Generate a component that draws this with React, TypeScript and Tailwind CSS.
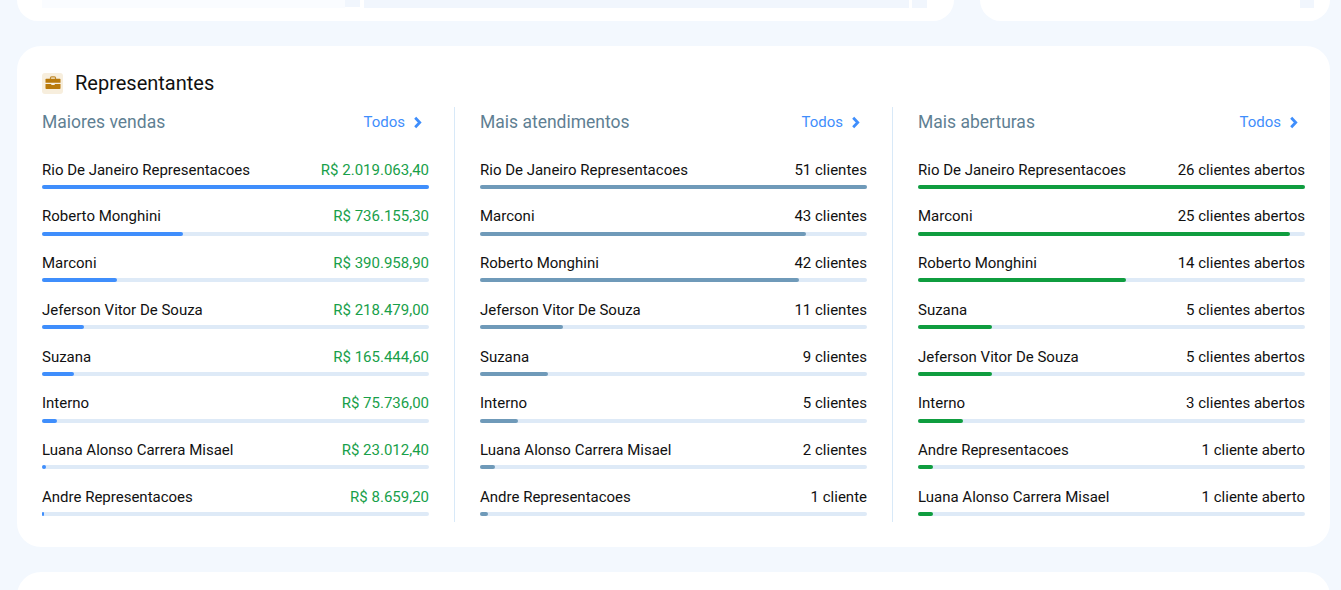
interface Row {
  name: string
  label: string
  value: number
}

const vendas: Row[] = [
  { name: 'Rio De Janeiro Representacoes', label: 'R$ 2.019.063,40', value: 2019063.4 },
  { name: 'Roberto Monghini', label: 'R$ 736.155,30', value: 736155.3 },
  { name: 'Marconi', label: 'R$ 390.958,90', value: 390958.9 },
  { name: 'Jeferson Vitor De Souza', label: 'R$ 218.479,00', value: 218479 },
  { name: 'Suzana', label: 'R$ 165.444,60', value: 165444.6 },
  { name: 'Interno', label: 'R$ 75.736,00', value: 75736 },
  { name: 'Luana Alonso Carrera Misael', label: 'R$ 23.012,40', value: 23012.4 },
  { name: 'Andre Representacoes', label: 'R$ 8.659,20', value: 8659.2 },
]

const atendimentos: Row[] = [
  { name: 'Rio De Janeiro Representacoes', label: '51 clientes', value: 51 },
  { name: 'Marconi', label: '43 clientes', value: 43 },
  { name: 'Roberto Monghini', label: '42 clientes', value: 42 },
  { name: 'Jeferson Vitor De Souza', label: '11 clientes', value: 11 },
  { name: 'Suzana', label: '9 clientes', value: 9 },
  { name: 'Interno', label: '5 clientes', value: 5 },
  { name: 'Luana Alonso Carrera Misael', label: '2 clientes', value: 2 },
  { name: 'Andre Representacoes', label: '1 cliente', value: 1 },
]

const aberturas: Row[] = [
  { name: 'Rio De Janeiro Representacoes', label: '26 clientes abertos', value: 26 },
  { name: 'Marconi', label: '25 clientes abertos', value: 25 },
  { name: 'Roberto Monghini', label: '14 clientes abertos', value: 14 },
  { name: 'Suzana', label: '5 clientes abertos', value: 5 },
  { name: 'Jeferson Vitor De Souza', label: '5 clientes abertos', value: 5 },
  { name: 'Interno', label: '3 clientes abertos', value: 3 },
  { name: 'Andre Representacoes', label: '1 cliente aberto', value: 1 },
  { name: 'Luana Alonso Carrera Misael', label: '1 cliente aberto', value: 1 },
]

function BriefcaseIcon() {
  return (
    <div className="flex size-[21px] items-center justify-center rounded-[3px] bg-[#f7eedd]">
      <svg width="16" height="14" viewBox="0 0 16 14">
        <path d="M5.5 3V1.8C5.5 1.2 6 .8 6.5 .8h3c.5 0 1 .4 1 1V3" fill="none" stroke="#c08a2e" strokeWidth="1.2" />
        <path d="M1.2 2.7h13.6c.5 0 .7.3.7.7v3.400H.5V3.400c0-.4.2-.7.7-.7z" fill="#b97a0c" />
        <path d="M.5 7.900h5.800v1.200h3.400V7.900h5.800v4.400c0 .5-.3.8-.8.8H1.300c-.5 0-.8-.3-.8-.8z" fill="#b97a0c" />
      </svg>
    </div>
  )
}

function TodosChevron() {
  return (
    <svg width="9" height="13" viewBox="0 0 9 13">
      <path d="M2.200 1.800 6.700 6.500 2.200 11.200" fill="none" stroke="currentColor" strokeWidth="2.800" />
    </svg>
  )
}

function RankColumn({
  title,
  rows,
  labelClass,
  barClass,
  divider,
}: {
  title: string
  rows: Row[]
  labelClass: string
  barClass: string
  divider?: boolean
}) {
  const max = rows[0].value

  return (
    <div className={divider ? 'border-l border-[#d8e9f8] pl-[25px]' : ''}>
      <div className="w-[387px]">
        <div className="flex h-[29px] items-center justify-between">
          <span className="pt-[2px] text-[17.5px] text-[#5f7f93]">{title}</span>
          <a className="flex items-center gap-[8px] pr-[7px] pt-[1px] text-[15px] text-[#3f8efc]">
            Todos
            <TodosChevron />
          </a>
        </div>
        <div className="mt-[23.25px] flex flex-col gap-[17.25px]">
          {rows.map((row) => (
            <div key={row.name}>
              <div className="flex h-[21px] items-center justify-between text-[15px] text-[#111]">
                <span>{row.name}</span>
                <span className={labelClass}>{row.label}</span>
              </div>
              <div className="mt-[4.5px] h-[4px] rounded-full bg-[#deeaf7]">
                <div
                  className={`h-full rounded-full ${barClass}`}
                  style={{ width: `${(row.value / max) * 100}%` }}
                />
              </div>
            </div>
          ))}
        </div>
      </div>
    </div>
  )
}

export default function App() {
  return (
    <div className="h-[590px] w-[1341px] overflow-hidden bg-[#f3f8fe] font-['Roboto',sans-serif]">
      {/* cards de cima, cortados pelo scroll */}
      <div className="flex h-[21px] gap-[26px] pl-[17px]">
        <div className="flex w-[937px] justify-between rounded-b-[24px] bg-white pl-[25px] pr-[27px]">
          <div className="flex h-[8px] flex-1">
            <div className="w-[303px] bg-[#fafcff]" />
            <div className="h-[7px] w-[15px] bg-[#f1f6fd]" />
            <div className="ml-[4px] w-[545px] bg-[#f1f6fd]" />
            <div className="ml-[3px] w-[15px] bg-[#f1f6fd]" />
          </div>
        </div>
        <div className="flex w-[350px] justify-end rounded-b-[24px] bg-white pr-[16px]">
          <div className="h-[8px] w-[14px] bg-[#f1f6fd]" />
        </div>
      </div>

      <div className="ml-[17px] mt-[25px] h-[501px] w-[1313px] rounded-[24px] bg-white px-[25px] pt-[26px]">
        <div className="flex h-[22px] items-center gap-[12px]">
          <BriefcaseIcon />
          <h2 className="text-[20px] text-[#111]">Representantes</h2>
        </div>
        <div className="mt-[13px] flex h-[415px] gap-[25px]">
          <RankColumn
            title="Maiores vendas"
            rows={vendas}
            labelClass="text-[#18a04a]"
            barClass="bg-[#3f8efc]"
          />
          <RankColumn
            title="Mais atendimentos"
            rows={atendimentos}
            labelClass=""
            barClass="bg-[#6f9ab9]"
            divider
          />
          <RankColumn
            title="Mais aberturas"
            rows={aberturas}
            labelClass=""
            barClass="bg-[#0f9d3f]"
            divider
          />
        </div>
      </div>

      <div className="ml-[17px] mt-[25px] h-[60px] w-[1313px] rounded-t-[24px] bg-white" />
    </div>
  )
}
